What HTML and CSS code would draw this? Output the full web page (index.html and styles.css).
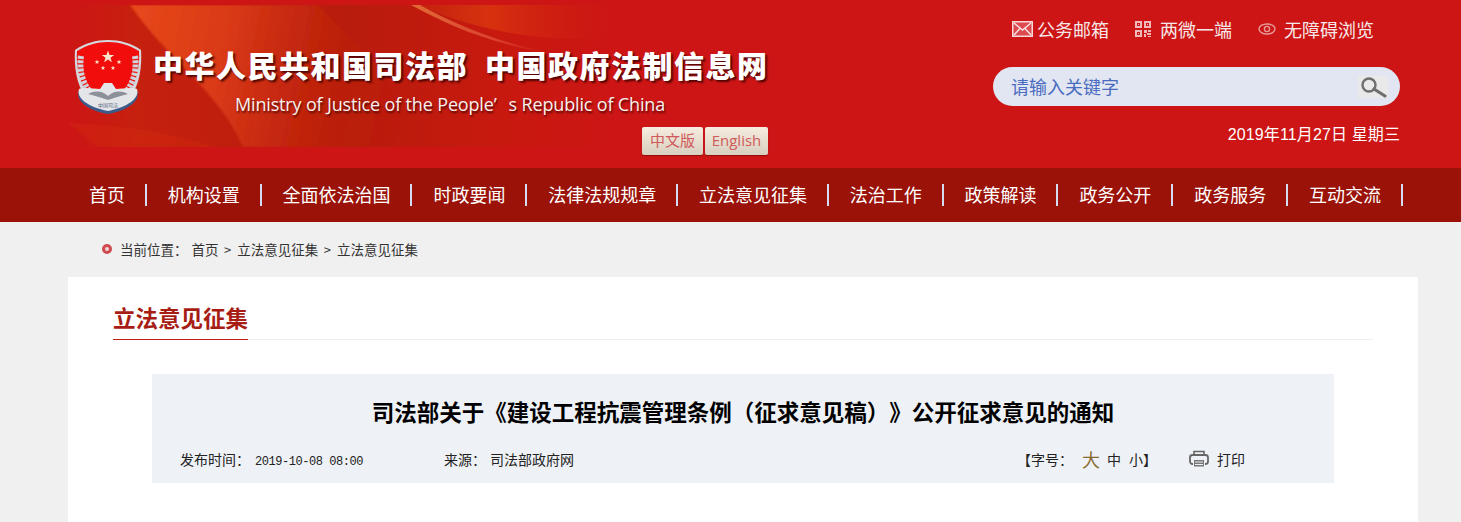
FILE: index.html
```html
<!DOCTYPE html>
<html lang="zh-CN">
<head>
    <meta charset="UTF-8">
    <meta name="viewport" content="width=device-width, initial-scale=1.0">
    <title>立法意见征集</title>
    <link rel="stylesheet" href="styles.css">
</head>
<body>
    <!-- Header -->
    <header class="header">
        <svg class="banner" width="560" height="142" viewBox="0 0 560 142">
            <defs>
                <linearGradient id="bannerBase" x1="0" y1="0" x2="1" y2="0">
                    <stop offset="0" stop-color="#cd1515"/>
                    <stop offset="0.12" stop-color="#c6200f"/>
                    <stop offset="0.5" stop-color="#b81c0c"/>
                    <stop offset="0.78" stop-color="#c8190f"/>
                    <stop offset="1" stop-color="#cd1515"/>
                </linearGradient>
                <linearGradient id="bannerSweep" x1="0" y1="0" x2="1" y2="0.1">
                    <stop offset="0" stop-color="#e8491a"/>
                    <stop offset="0.35" stop-color="#e0401a" stop-opacity="0.8"/>
                    <stop offset="0.75" stop-color="#c22a0c" stop-opacity="0.2"/>
                    <stop offset="1" stop-color="#c22a0c" stop-opacity="0"/>
                </linearGradient>
                <linearGradient id="bannerTop" x1="0" y1="0" x2="1" y2="0">
                    <stop offset="0" stop-color="#d03a10" stop-opacity="0"/>
                    <stop offset="0.4" stop-color="#d8340f" stop-opacity="0.9"/>
                    <stop offset="1" stop-color="#cd1515" stop-opacity="0"/>
                </linearGradient>
                <linearGradient id="bannerStreak" x1="0" y1="0" x2="1" y2="0">
                    <stop offset="0" stop-color="#e8803c" stop-opacity="0.8"/>
                    <stop offset="0.6" stop-color="#ee6a50" stop-opacity="0.5"/>
                    <stop offset="1" stop-color="#ee6a50" stop-opacity="0"/>
                </linearGradient>
                <filter id="bannerSoft"><feGaussianBlur stdDeviation="1"/></filter>
            </defs>
            <rect width="560" height="142" fill="url(#bannerBase)"/>
            <path d="M62 0 C100 55 150 85 175 142 L360 142 C330 80 280 30 250 0 Z" fill="url(#bannerSweep)" filter="url(#bannerSoft)"/>
            <path d="M0 118 C60 120 110 130 145 142 L30 142 Z" fill="#d6300f" opacity="0.3"/>
            <path d="M330 0 L560 0 L560 30 C490 40 420 30 350 0 Z" fill="url(#bannerTop)"/>
            <path d="M343 0 C380 20 420 38 480 48 C420 34 385 18 352 0 Z" fill="url(#bannerStreak)"/>
        </svg>

        <div class="logo">
            <svg class="emblem" width="68" height="74" viewBox="0 0 68 74">
                <defs>
                    <polygon id="emblemStar" points="0,-1 0.24,-0.31 0.95,-0.31 0.38,0.12 0.59,0.81 0,0.4 -0.59,0.81 -0.38,0.12 -0.95,-0.31 -0.24,-0.31"/>
                </defs>
                <path d="M34 0 C46 0 57 3 67 10 C68 26 66 44 56 58 L12 58 C2 44 0 26 1 10 C11 3 22 0 34 0 Z" fill="#d5d8de"/>
                <path d="M34 2 C45 2 55 5 65 11 C66 26 63 42 54 55 L14 55 C5 42 2 26 3 11 C13 5 23 2 34 2 Z" fill="#f20d0d"/>
                <g fill="#f6e6cc">
                    <use href="#emblemStar" transform="translate(34 17) scale(6.5)"/>
                    <use href="#emblemStar" transform="translate(23 22) scale(2.6)"/>
                    <use href="#emblemStar" transform="translate(45 22) scale(2.6)"/>
                    <use href="#emblemStar" transform="translate(29 28) scale(2.4)"/>
                    <use href="#emblemStar" transform="translate(39 28) scale(2.4)"/>
                </g>
                <path d="M7 16 C5 30 8 44 18 54" fill="none" stroke="#cfd3d8" stroke-width="6" stroke-dasharray="3 1.2"/>
                <path d="M61 16 C63 30 60 44 50 54" fill="none" stroke="#cfd3d8" stroke-width="6" stroke-dasharray="3 1.2"/>
                <path d="M30 44 L38 44 L42 50 C48 50 58 48 63 50 C67 60 56 70 34 74 C12 70 1 60 5 50 C10 48 20 50 26 50 Z" fill="#3c5a8c"/>
                <path d="M30 43 L38 43 L42 49 C48 49 58 47 63 49 C66 58 54 67 34 71 C14 67 2 58 5 49 C10 47 20 49 26 49 Z" fill="#e3e5e9"/>
                <path d="M14 54 C22 49 30 52 34 56 C38 52 46 49 54 54 C46 56 40 58 34 60 C28 58 22 56 14 54 Z" fill="#8c9098"/>
                <text class="emblem-text" x="34" y="67" text-anchor="middle">中国司法</text>
            </svg>
            <div class="site-name">
                <h1 class="site-title">中华人民共和国司法部<span class="site-title-sub">中国政府法制信息网</span></h1>
                <p class="site-title-en">Ministry of Justice of the People<span class="quote">’</span>s Republic of China</p>
                <div class="lang-switch">
                    <a class="lang-button lang-cn" href="#">中文版</a>
                    <a class="lang-button" href="#">English</a>
                </div>
            </div>
        </div>

        <div class="header-right">
            <div class="top-links">
                <a class="top-link" href="#">
                    <svg class="mail-icon" width="21" height="16" viewBox="0 0 21 16">
                        <rect x="0" y="0" width="21" height="16" fill="#f8d8d8"/>
                        <rect x="1.5" y="1.5" width="18" height="13" fill="#dc4a50"/>
                        <path d="M2 2 L10.5 9 L19 2 M2 14 L8 7.5 M19 14 L13 7.5" fill="none" stroke="#fbe6e6" stroke-width="1.4"/>
                    </svg>
                    公务邮箱
                </a>
                <a class="top-link link-qr" href="#">
                    <svg class="qr-icon" width="16" height="16" viewBox="0 0 16 16" fill="#f0baba">
                        <path d="M0 0h7v7H0z M2 2v3h3V2z M9 0h7v7H9z M11 2v3h3V2z M0 9h7v7H0z M2 11v3h3v-3z" fill-rule="evenodd"/>
                        <rect x="3" y="3" width="1" height="1"/>
                        <rect x="12" y="3" width="1" height="1"/>
                        <rect x="3" y="12" width="1" height="1"/>
                        <rect x="9" y="9" width="3" height="3"/>
                        <rect x="13" y="9" width="3" height="2"/>
                        <rect x="12" y="12" width="4" height="2"/>
                        <rect x="9" y="13" width="2" height="3"/>
                        <rect x="13" y="15" width="3" height="1"/>
                    </svg>
                    两微一端
                </a>
                <a class="top-link link-eye" href="#">
                    <svg class="eye-icon" width="18" height="12" viewBox="0 0 18 12">
                        <ellipse cx="9" cy="6" rx="8" ry="5" fill="none" stroke="#e59a9a" stroke-width="1.4"/>
                        <circle cx="9" cy="6" r="2.6" fill="none" stroke="#e59a9a" stroke-width="1.4"/>
                    </svg>
                    无障碍浏览
                </a>
            </div>
            <form class="search-box" onsubmit="return false">
                <input class="search-input" type="text" placeholder="请输入关键字">
                <button class="search-button" type="submit">
                    <svg width="30" height="22" viewBox="0 0 30 22">
                        <circle cx="11" cy="9" r="6.5" fill="none" stroke="#6f6f6f" stroke-width="2.4"/>
                        <path d="M16 13 L27 20" stroke="#6f6f6f" stroke-width="3.2" stroke-linecap="round"/>
                    </svg>
                </button>
            </form>
            <div class="date">2019年11月27日 星期三</div>
        </div>
    </header>

    <!-- Navigation -->
    <nav class="nav">
        <a class="nav-item" href="#">首页</a>
        <a class="nav-item" href="#">机构设置</a>
        <a class="nav-item" href="#">全面依法治国</a>
        <a class="nav-item" href="#">时政要闻</a>
        <a class="nav-item" href="#">法律法规规章</a>
        <a class="nav-item" href="#">立法意见征集</a>
        <a class="nav-item" href="#">法治工作</a>
        <a class="nav-item" href="#">政策解读</a>
        <a class="nav-item" href="#">政务公开</a>
        <a class="nav-item" href="#">政务服务</a>
        <a class="nav-item" href="#">互动交流</a>
    </nav>

    <!-- Breadcrumb -->
    <div class="breadcrumb">
        <span class="crumb-pin"></span>
        <span class="crumb-label">当前位置：</span>
        <a href="#">首页</a>
        <span class="crumb-sep">&gt;</span>
        <a href="#">立法意见征集</a>
        <span class="crumb-sep">&gt;</span>
        <a href="#">立法意见征集</a>
    </div>

    <!-- Main -->
    <main class="main">
        <div class="section-head">
            <h2 class="section-title">立法意见征集</h2>
        </div>
        <article class="article-head">
            <h3 class="article-title">司法部关于《建设工程抗震管理条例（征求意见稿）》公开征求意见的通知</h3>
            <div class="article-meta">
                <span class="meta-date">发布时间：<span class="meta-time">2019-10-08 08:00</span></span>
                <span class="meta-source">来源：<span class="meta-source-name">司法部政府网</span></span>
                <div class="meta-tools">
                    <span class="font-size">【字号：<a class="size-big" href="#">大</a><a class="size-mid" href="#">中</a><a class="size-small" href="#">小</a>】</span>
                    <a class="print" href="#">
                        <svg width="20" height="18" viewBox="0 0 20 18">
                            <path d="M5 5 V1.5 H15 V5" fill="none" stroke="#666" stroke-width="1.6"/>
                            <rect x="1" y="5" width="18" height="9" rx="2.5" fill="none" stroke="#666" stroke-width="1.8"/>
                            <rect x="4.5" y="9.5" width="11" height="7.5" fill="#777" stroke="#eef1f6" stroke-width="1"/>
                            <path d="M6 12 H14 M6 14.5 H14" stroke="#eef1f6" stroke-width="1"/>
                        </svg>
                        打印
                    </a>
                </div>
            </div>
        </article>
    </main>
</body>
</html>
```

FILE: styles.css
```css
* {
    margin: 0;
    padding: 0;
    box-sizing: border-box;
    font-family: "Liberation Sans", "Noto Sans CJK SC", sans-serif;
    text-spacing-trim: space-all;
}

html, body {
    height: 100%;
    overflow: hidden;
}

body {
    background-color: #f0f0f0;
    display: flex;
    flex-direction: column;
}

a {
    color: inherit;
    text-decoration: none;
}

/* Header */
.header {
    position: relative;
    display: flex;
    flex: none;
    height: 168px;
    padding-left: 74px;
    background-color: #cd1515;
}

.banner {
    position: absolute;
    left: 68px;
    top: 5px;
}

.logo {
    position: relative;
    display: flex;
    gap: 11px;
    padding-top: 40px;
}

.emblem {
    flex: none;
}

.emblem-text {
    font-size: 5px;
    fill: #5a6a80;
}

.site-name {
    width: 615px;
    padding-top: 4px;
}

.site-title {
    font-family: "Noto Sans CJK SC", sans-serif;
    font-size: 30px;
    font-weight: 900;
    line-height: 40px;
    letter-spacing: 1.5px;
    color: #fff;
    white-space: nowrap;
    text-shadow: 2px 2px 2px rgba(60, 0, 0, 0.85);
}

.site-title-sub {
    font: inherit;
    margin-left: 17px;
}

.site-title-en {
    margin: 8px 0 0 82px;
    font-family: "Open Sans", sans-serif;
    font-size: 18px;
    line-height: 24px;
    letter-spacing: -0.16px;
    color: #f8f0ee;
    white-space: nowrap;
    text-shadow: 1px 2px 2px rgba(60, 0, 0, 0.8);
}

.quote {
    font-family: inherit;
    margin-right: 12px;
}

.lang-switch {
    display: flex;
    justify-content: flex-end;
    gap: 2px;
    margin-top: 11px;
}

.lang-button {
    width: 63px;
    height: 28px;
    line-height: 26px;
    text-align: center;
    font-family: "Open Sans", "Noto Sans CJK SC", sans-serif;
    font-size: 15px;
    color: #cf5a5a;
    background: linear-gradient(#f6ecdf, #d8cfc0);
    border-radius: 2px;
    box-shadow: 0 1px 1px rgba(90, 0, 0, 0.5);
}

.lang-cn {
    width: 61px;
}

.header-right {
    position: relative;
    flex: none;
    width: 407px;
    margin-left: auto;
    margin-right: 61px;
}

.top-links {
    display: flex;
    align-items: center;
    height: 22px;
    margin-top: 18px;
    padding-left: 19px;
}

.top-link {
    display: flex;
    align-items: center;
    font-family: "Noto Sans CJK SC", sans-serif;
    font-size: 18px;
    color: #f6e8e8;
    white-space: nowrap;
}

.mail-icon {
    margin-right: 4px;
}

.qr-icon {
    margin-right: 9px;
}

.eye-icon {
    margin-right: 8px;
}

.link-qr {
    margin-left: 26px;
}

.link-eye {
    margin-left: 26px;
}

.search-box {
    display: flex;
    align-items: center;
    height: 39px;
    margin-top: 27px;
    padding: 0 12px 0 18px;
    background-color: #e1e6f2;
    border-radius: 20px;
}

.search-input {
    flex: 1;
    height: 24px;
    margin-bottom: 2px;
    border: none;
    outline: none;
    background: none;
    font-family: "Noto Sans CJK SC", sans-serif;
    font-size: 18px;
    color: #4a6cc0;
}

.search-input::placeholder {
    color: #4a6cc0;
    opacity: 1;
}

.search-button {
    display: flex;
    width: 30px;
    height: 22px;
    border: none;
    background-color: #e9e9e9;
}

.date {
    margin-top: 18px;
    font-size: 16px;
    line-height: 22px;
    letter-spacing: 0.12px;
    text-align: right;
    color: #fff;
}

/* Navigation */
.nav {
    display: flex;
    flex: none;
    align-items: center;
    height: 54px;
    padding-left: 68px;
    background-color: #9a1208;
}

.nav-item {
    height: 22px;
    padding: 0 19.8px 0 21px;
    font-family: "Noto Sans CJK SC", sans-serif;
    font-size: 18px;
    line-height: 20px;
    color: #fff;
    border-right: 2px solid #d5dcf0;
    white-space: nowrap;
}

/* Breadcrumb */
.breadcrumb {
    display: flex;
    flex: none;
    align-items: center;
    height: 55px;
    padding: 0 0 1px 102px;
    font-family: "Noto Sans CJK SC", sans-serif;
    font-size: 13.5px;
    color: #333;
}

.breadcrumb a,
.breadcrumb span {
    font-family: inherit;
}

.crumb-pin {
    width: 10px;
    height: 10px;
    margin-right: 8px;
    border: 3px solid #cf4a4e;
    border-radius: 50%;
    background-color: #f3d8d8;
}

.crumb-label {
    margin-right: 4px;
}

.crumb-sep {
    margin: 0 6px 0 5.5px;
    font-size: 13px;
}

/* Main */
.main {
    flex: 1;
    margin: 0 43px 0 68px;
    padding: 27px 45px 0;
    background-color: #fff;
}

.section-head {
    border-bottom: 1px solid #eee;
}

.section-title {
    display: inline-block;
    height: 36px;
    margin-bottom: -1px;
    font-family: "Noto Sans CJK SC", sans-serif;
    font-size: 22.5px;
    font-weight: 700;
    line-height: 27px;
    color: #a71d14;
    border-bottom: 1px solid #c0201a;
}

.article-head {
    height: 109px;
    margin: 34px 39px 0;
    background-color: #eef1f6;
}

.article-title {
    padding-top: 21px;
    font-family: "Noto Sans CJK SC", sans-serif;
    font-size: 22.5px;
    font-weight: 700;
    line-height: 32px;
    text-align: center;
    color: #000;
    white-space: nowrap;
}

.article-meta {
    display: flex;
    align-items: center;
    height: 26px;
    margin-top: 19px;
    padding: 0 89px 0 28px;
    font-family: "Noto Sans CJK SC", sans-serif;
    font-size: 14px;
    color: #222;
}

.article-meta span,
.article-meta a {
    font-family: inherit;
}

.meta-date {
    width: 264px;
}

.meta-time {
    margin-left: 5px;
    font-family: "Liberation Mono", monospace !important;
    font-size: 12px;
    letter-spacing: -0.45px;
}

.meta-source-name {
    margin-left: 4px;
}

.meta-tools {
    display: flex;
    align-items: center;
    margin-left: auto;
}

.font-size {
    display: flex;
    align-items: center;
}

.size-big {
    margin: 0 7px 0 9px;
    font-size: 18px;
    color: #8a6b2c;
}

.size-mid {
    margin-right: 8px;
}

.print {
    display: flex;
    align-items: center;
    gap: 8px;
    margin-left: 32px;
}
```
